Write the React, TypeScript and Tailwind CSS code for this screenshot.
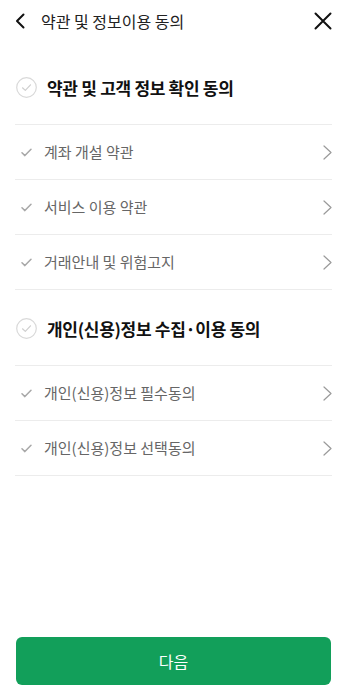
const font = { fontFamily: '"Noto Sans CJK KR", "Noto Sans", sans-serif' }

const sections = [
  { title: '약관 및 고객 정보 확인 동의', items: ['계좌 개설 약관', '서비스 이용 약관', '거래안내 및 위험고지'] },
  { title: '개인(신용)정보 수집·이용 동의', items: ['개인(신용)정보 필수동의', '개인(신용)정보 선택동의'] },
]

const CircleCheck = () => (
  <svg width="21" height="21" viewBox="0 0 21 21" fill="none">
    <circle cx="10.5" cy="10.5" r="9.8" stroke="#d9d9d9" strokeWidth="1.2" />
    <path d="M6.5 10.8 L9.3 13.4 L14.5 7.8" stroke="#cfcfcf" strokeWidth="1.2" strokeLinecap="round" strokeLinejoin="round" />
  </svg>
)

const SmallCheck = () => (
  <svg width="11" height="9" viewBox="0 0 11 9" fill="none">
    <path d="M1 4.8 L3.9 7.6 L10 1.2" stroke="#a8a8a8" strokeWidth="1.5" strokeLinecap="round" strokeLinejoin="round" />
  </svg>
)

const Chevron = () => (
  <svg width="9" height="15" viewBox="0 0 9 15" fill="none">
    <path d="M1 1 L8 7.5 L1 14" stroke="#9a9a9a" strokeWidth="1.2" strokeLinecap="round" strokeLinejoin="round" />
  </svg>
)

export default function App() {
  return (
    <div className="w-[347px] h-[694px] bg-white flex flex-col" style={font}>
      <header className="h-[42px] flex items-center pl-[14px] pr-[15px]">
        <svg width="14" height="16" viewBox="0 0 14 16" fill="none">
          <path d="M9.5 1.5 L3 8 L9.5 14.5" stroke="#111" strokeWidth="2" strokeLinecap="round" strokeLinejoin="round" />
        </svg>
        <h1 className="ml-[13px] text-[16px] text-[#222]">약관 및 정보이용 동의</h1>
        <svg className="ml-auto" width="18" height="18" viewBox="0 0 18 18" fill="none">
          <path d="M1.5 1.5 L16.5 16.5 M16.5 1.5 L1.5 16.5" stroke="#111" strokeWidth="2" strokeLinecap="round" />
        </svg>
      </header>

      <main className="flex-1 px-[15px] pt-[7px]">
        {sections.map((s) => (
          <section key={s.title}>
            <div className="h-[76px] flex items-center pt-[2px] pl-[1px] border-b border-[#ececec]">
              <CircleCheck />
              <span className="ml-[10px] text-[17px] font-bold text-[#111] tracking-[-0.3px]">{s.title}</span>
            </div>
            {s.items.map((item) => (
              <div key={item} className="h-[55px] flex items-center border-b border-[#ececec] pl-[6px] pr-0">
                <SmallCheck />
                <span className="ml-[12px] text-[15px] text-[#666]">{item}</span>
                <span className="ml-auto"><Chevron /></span>
              </div>
            ))}
          </section>
        ))}
      </main>

      <div className="px-[16px] pb-[9px]">
        <button className="w-full h-[48px] rounded-[6px] bg-[#129f5a] text-white text-[16px]">다음</button>
      </div>
    </div>
  )
}
